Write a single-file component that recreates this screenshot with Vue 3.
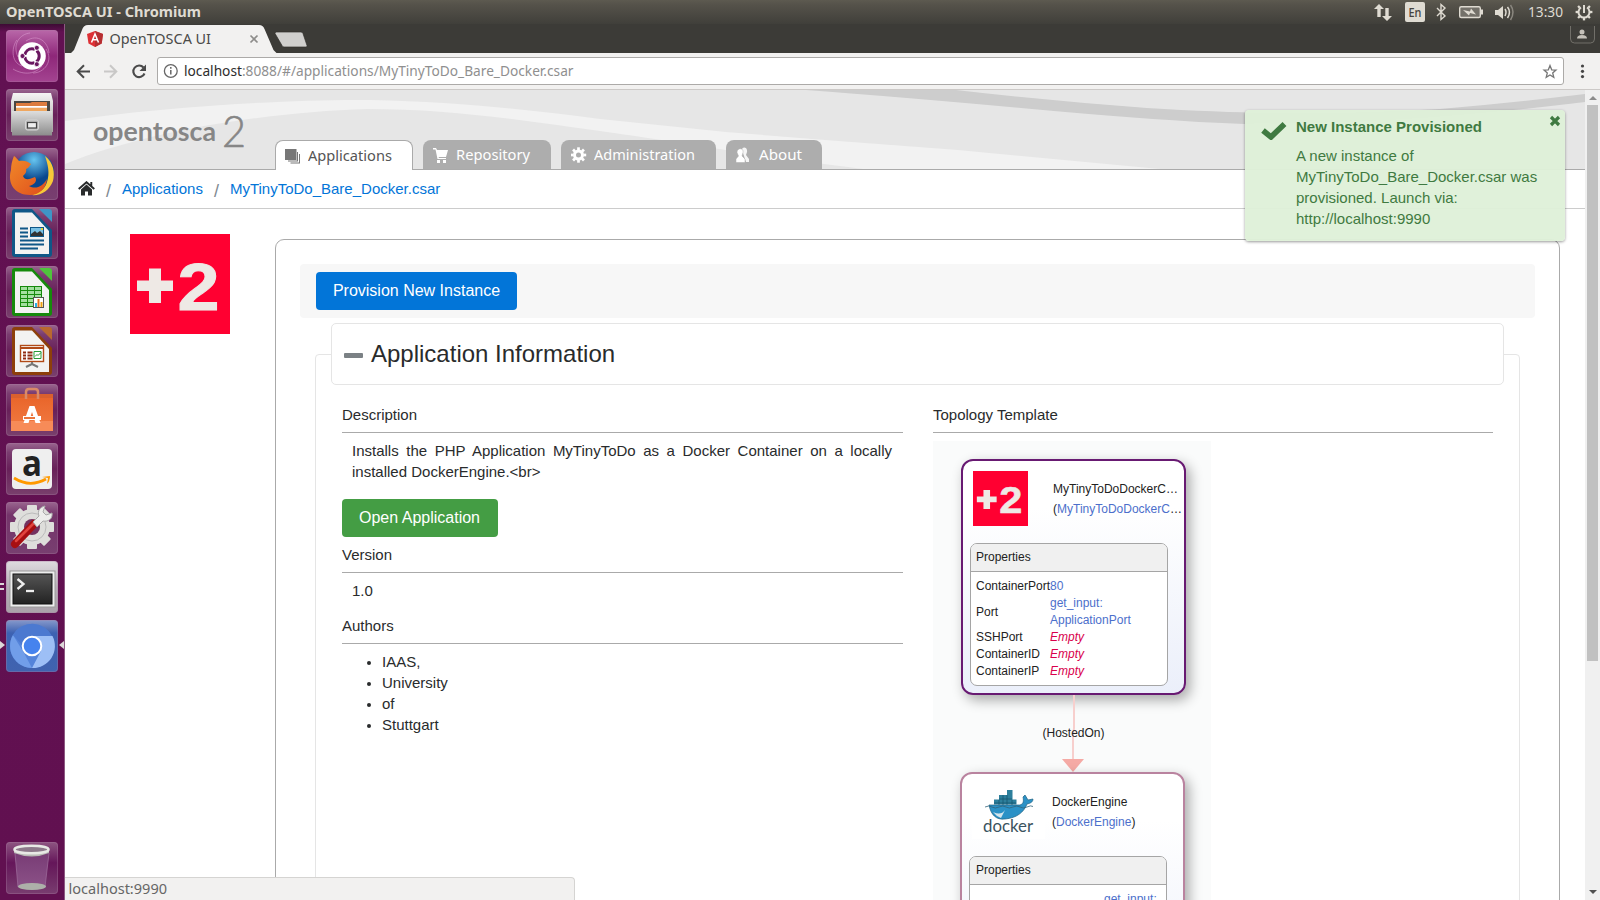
<script setup>
const tabs = [
  { id: 'apps', label: 'Applications', width: 138, text: 84, gap: 10, active: true },
  { id: 'repo', label: 'Repository', width: 128, text: 74, gap: 10 },
  { id: 'admin', label: 'Administration', width: 155, text: 101, gap: 10 },
  { id: 'about', label: 'About', width: 96, text: 43, gap: 0 },
]
const launcher = ['dash', 'files', 'firefox', 'writer', 'calc', 'impress', 'software', 'amazon', 'settings', 'terminal', 'chromium']
const authors = ['IAAS,', 'University', 'of', 'Stuttgart']
const docColors = {
  writer: ['#0f5787', '#3f95c6'],
  calc: ['#168a0c', '#4fc43c'],
  impress: ['#8d3f0b', '#b9692f'],
}
const teeth = [0, 45, 90, 135, 180, 225, 270, 315]
</script>

<template>
  <div class="desktop">
    <header class="menubar">
      <svg class="menu-title" width="210" height="24"><text x="6" y="17" textLength="195" lengthAdjust="spacingAndGlyphs">OpenTOSCA UI - Chromium</text></svg>
      <svg class="indicators" width="240" height="24" viewBox="1360 0 240 24">
        <g fill="#dfdbd2">
          <path d="M1379 4l5 5h-3.300v8h-3.400V9h-3.300zM1387 21l-5-5h3.300V8h3.400v8h3.300z" />
          <rect x="1405" y="2" width="20" height="20" rx="2" />
          <path d="M1495 10h3l5-4v13l-5-4h-3z" />
        </g>
        <text class="en" x="1408.500" y="17" textLength="13" lengthAdjust="spacingAndGlyphs">En</text>
        <path d="M1437 8l8 8-4 3.500V4.500l4 3.500-8 8" fill="none" stroke="#dfdbd2" stroke-width="1.400" />
        <rect x="1459.700" y="6.700" width="20.600" height="10.800" rx="1.500" fill="#74716a" stroke="#dfdbd2" stroke-width="1.400" />
        <path d="M1481 9.500h2v5h-2M1463 10l7 1.500 1-3 5 6-6-1.500-1 2.500z" fill="#dfdbd2" />
        <path d="M1505 9q2 3 0 7M1507.500 7q4 5 0 11" fill="none" stroke="#dfdbd2" stroke-width="1.500" />
        <path d="M1510.500 5q5 7 0 15" fill="none" stroke="#8a877f" stroke-width="1.500" />
        <text class="clock" x="1528" y="17" textLength="35" lengthAdjust="spacingAndGlyphs">13:30</text>
        <g transform="translate(1584 12)" stroke="#dfdbd2" fill="none">
          <path d="M-3-4.500A5.500 5.500 0 1 0 3-4.500" stroke-width="2" />
          <path d="M0-7V1" stroke-width="2" />
          <path v-for="a in teeth.slice(1)" :key="a" :transform="`rotate(${a})`" d="M0-6V-8.400" stroke-width="2.300" />
        </g>
      </svg>
    </header>

    <div class="workspace">
      <aside class="launcher">
        <svg width="0" height="0" class="defs">
          <defs>
            <linearGradient id="silver" x2="0" y2="1"><stop stop-color="#f5f5f4" /><stop offset="1" stop-color="#a3a3a0" /></linearGradient>
            <linearGradient id="metal" x2="0" y2="1"><stop stop-color="#dedede" /><stop offset="1" stop-color="#8c8c8c" /></linearGradient>
            <linearGradient id="fox" x2="1" y2="1"><stop stop-color="#f18a29" /><stop offset="1" stop-color="#df4d1c" /></linearGradient>
            <radialGradient id="globe" cy=".2"><stop stop-color="#66c5f0" /><stop offset="1" stop-color="#09468d" /></radialGradient>
            <linearGradient id="bag" x2="0" y2="1"><stop stop-color="#e9662b" /><stop offset="1" stop-color="#f27b43" /></linearGradient>
            <linearGradient id="screen" x2="0" y2="1"><stop stop-color="#555" /><stop offset="1" stop-color="#222" /></linearGradient>
            <linearGradient id="bin" x2="0" y2="1"><stop stop-color="#783c75" /><stop offset="1" stop-color="#8d5389" /></linearGradient>
          </defs>
        </svg>
        <div v-for="name in launcher" :key="name" class="tile" :class="name">
          <svg width="52" height="52" viewBox="0 0 52 52">
            <g v-if="name === 'dash'">
              <g fill="none" stroke="#e0a3d5" stroke-opacity=".5">
                <path d="M12 27C6 14 14 4 24 3M40 19c8 12-2 24-13 24M20 11c12-8 22 1 23 12M16 36c-12-4-10-20-5-26M36 36C28 46 15 44 7 39" />
              </g>
              <circle cx="26" cy="26" r="13.800" fill="#fff" />
              <circle cx="26" cy="26" r="7.200" fill="none" stroke="#6a1760" stroke-width="3" stroke-dasharray="13.080 2" stroke-dashoffset="6.540" />
              <g fill="#6a1760" stroke="#fff" stroke-width=".8"><circle cx="16.500" cy="26" r="2.500" /><circle cx="30.800" cy="17.800" r="2.500" /><circle cx="30.800" cy="34.200" r="2.500" /></g>
            </g>
            <g v-else-if="name === 'files'">
              <path d="M7 4h38l2 8v31H5V12z" fill="url(#silver)" /><path d="M8 12h36v10H8z" fill="#4a4743" />
              <path d="M10 14h14l2-1h15v10H10z" fill="#dc7b3e" /><path d="M10 17h31v1.800H10z" fill="#fff" /><path d="M10 19h31v4H10z" fill="#efa760" />
              <path d="M6 22h40v24.500H6z" fill="url(#metal)" /><rect x="19.500" y="31" width="13" height="10" rx="2" fill="#b9b9b9" stroke="#d5d5d5" /><rect x="21.500" y="33.500" width="9" height="5.500" fill="#eee" stroke="#444" stroke-width="1.200" />
            </g>
            <g v-else-if="name === 'firefox'">
              <circle cx="28" cy="24" r="20" fill="url(#globe)" />
              <path d="M39 8c9 7 10 17 8 25C43 43 35 48 25 47c8-2 14-6 16-13 3-9 1-17-2-26z" fill="#f7c838" />
              <path d="M8 8c2 1 3 3 5 5 4-1 9 0 12 3l-3 4-2 1c1 3-1 5-3 7 2 5 7 3 12 1 3 4-1 8-6 9 7 4 14 0 18-7-1 10-8 16-17 16C9 47 1 36 5 22c0-5 1-9 3-14z" fill="url(#fox)" />
            </g>
            <g v-else-if="docColors[name]">
              <path d="M9 2h17l20 21v24q0 3-3 3H9q-3 0-3-3V5q0-3 3-3z" :fill="docColors[name][0]" /><path d="M33 2h10q3 0 3 3v10z" :fill="docColors[name][1]" />
              <path d="M9 5.500h17L43 24v23H9z" fill="#f3f3f2" />
              <g v-if="name === 'writer'">
                <path d="M14 21.500h8M14 25.500h8M14 29.500h8M14 33.500h24M14 37.500h24M14 41.500h18" stroke="#0f5787" stroke-width="2" />
                <rect x="24.500" y="20.500" width="13" height="9" fill="#7ac1e4" stroke="#0f5787" /><path d="M25 29v-2l4-3 2 2 3-2 3 3v2z" fill="#333" /><circle cx="36" cy="22" r="1" fill="#fd0" />
              </g>
              <g v-else-if="name === 'calc'">
                <rect x="14.500" y="20.500" width="21" height="20" fill="#a3dfa0" stroke="#168a0c" /><path d="M14 24.500h22M14 28.500h22M14 32.500h22M14 36.500h22M21.500 20v21M28.500 20v21" stroke="#168a0c" />
                <rect x="27.500" y="31.500" width="10" height="10" fill="#fff" stroke="#555" /><path d="M29 41v-4h2v4" fill="#29aee5" /><path d="M31.500 41v-8h2v8" fill="#ea6d17" /><path d="M34.500 41v-5h2v5" fill="#eca012" />
              </g>
              <g v-else>
                <rect x="14.500" y="20.500" width="23" height="16" fill="#fff" stroke="#b14a17" stroke-width="1.400" /><path d="M15 23h23" stroke="#b14a17" stroke-width="2" /><path d="M17 27.500h3m1.500 0h5M17 30.500h3m1.500 0h5M17 33.500h3m1.500 0h5" stroke="#8f2b12" stroke-width="2" /><path d="M28 26.500h7v7h-7zm1 5 2-2 1 1 3-3" fill="none" stroke="#279c39" />
                <path d="M26 37v3m0-1-6 3m6-3 6 3" stroke="#777" stroke-width="2" />
              </g>
            </g>
            <g v-else-if="name === 'software'">
              <path d="M5 10h42v37H5z" fill="#d9602d" /><path d="M5 14h42v33H5z" fill="url(#bag)" /><path d="M5 37h42v10H5z" fill="#f78b58" />
              <path d="M20 15V8q0-3 3-3h6q3 0 3 3v7" fill="none" stroke="#d98a68" stroke-width="2.500" />
              <path d="M17.500 39h5l3.500-11 3.500 11h5l-6-17h-5z" fill="#fff" /><path d="M17 32h18v4H17z" fill="#fff" /><path d="M18 34h11" stroke="#e75e1a" stroke-width="1.700" />
            </g>
            <g v-else-if="name === 'amazon'">
              <rect x="6" y="6" width="40" height="40" rx="4" fill="#efefef" /><text class="amazon-a" x="16" y="33" textLength="20" lengthAdjust="spacingAndGlyphs">a</text>
              <path d="M8 35q16 10 32 1" fill="none" stroke="#f90" stroke-width="2.700" /><path d="M36 34l8-1q0 5-3 8l1-6z" fill="#f90" />
            </g>
            <g v-else-if="name === 'settings'">
              <g transform="translate(26 25)" fill="#dededb"><rect v-for="a in teeth" :key="a" x="-5" y="-22" width="10" height="10" rx="1" :transform="`rotate(${a})`" /><circle r="18" /><circle r="14" fill="none" stroke="#bbb" /><circle r="8" fill="#73315f" /></g>
              <path d="M9 42 28 22" stroke="#a70f12" stroke-width="8" stroke-linecap="round" /><path d="M10 39 28 21" stroke="#e2443e" stroke-width="2.500" stroke-linecap="round" />
              <path d="M27 20 33 14c-2-5 1-9 6-10l-2 6 3 3 6-2c1 6-4 9-9 8l-6 6z" fill="#ededeb" stroke="#aaa" />
            </g>
            <g v-else-if="name === 'terminal'">
              <rect x="4" y="10" width="45" height="36" fill="#eee" stroke="#999" /><rect x="7" y="13" width="39" height="30" fill="url(#screen)" stroke="#111" />
              <path d="M11.500 18l6 5-6 5" fill="none" stroke="#eee" stroke-width="2.300" /><path d="M20 30h8" stroke="#eee" stroke-width="2.300" />
            </g>
            <g v-else>
              <circle cx="26" cy="26" r="22" fill="#5484da" /><path d="M7 15 18 33 26 48A22 22 0 0 1 7 15z" fill="#719ee9" /><path d="M26 16h20.500A22 22 0 0 1 26 48l9-17z" fill="#9dbff6" /><path d="M7 15A22 22 0 0 1 46 16H26L16 25z" fill="#4c79d0" />
              <circle cx="26" cy="26" r="9.300" fill="#4683ee" stroke="#fff" stroke-width="2" />
            </g>
          </svg>
        </div>
        <div class="tile trash">
          <svg width="52" height="52" viewBox="0 0 52 52"><path d="M9 11h34l-4 34q-13 6-27 0z" fill="url(#bin)" /><path d="M9 11l3 34M43 11l-4 34" stroke="#9b6898" stroke-width=".8" /><ellipse cx="26" cy="44.500" rx="14" ry="3.500" fill="#adb0a9" /><path d="M8 7v4q18 7 35 0V7z" fill="#b9bab5" /><ellipse cx="25.500" cy="7.500" rx="17" ry="3.800" fill="#8d788a" stroke="#e8e9e5" stroke-width="2.500" /></svg>
        </div>
        <i class="pip two"></i><i class="pip run"></i><i class="pip focus"></i>
      </aside>

      <section class="browser">
        <div class="tabstrip">
          <svg width="260" height="29" viewBox="65 24 260 29">
            <path d="M71 53l3-3 8-20q1.500-5 6-5h171q4 0 5.500 4l9 21 3 3z" fill="#f2f1f0" />
            <path d="M275 33.500q0-1.500 1.500-1.500H301q1.500 0 2 1.500l4 12q.3 1.500-1 1.500h-22q-1.500 0-2-1.500z" fill="#d0cfcd" stroke="#302f2c" stroke-width=".7" />
            <path d="M95 31l8 3-1.300 9.500L95 47l-6.500-3.500L87 34z" fill="#dd3035" /><path d="M95 31l8 3-1.300 9.500L95 47z" fill="#b52e31" /><path d="M91.500 42.500 95 34l3.500 8.500M92.500 39.700h5" fill="none" stroke="#fff" stroke-width="1.500" />
            <text class="tab-name" x="109.500" y="44" textLength="101.500" lengthAdjust="spacingAndGlyphs">OpenTOSCA UI</text>
            <path d="M250.500 35.500l7 7m0-7-7 7" stroke="#8d8c8a" stroke-width="1.700" />
          </svg>
          <svg class="profile" width="27" height="20" viewBox="1569 24 27 20"><path d="M1570.500 26v13q0 4 4 4h16q4 0 4-4V26" fill="#3f3e3a" stroke="#716f69" /><circle cx="1582" cy="32" r="2.500" fill="#c5c1b9" /><path d="M1577 38.500q0-3.500 5-3.500t5 3.500z" fill="#c5c1b9" /></svg>
        </div>

        <div class="toolbar">
          <svg class="nav" width="92" height="36" viewBox="65 53 92 36">
            <path d="M90 71.500H78m6-6.300-6.300 6.300 6.300 6.300" fill="none" stroke="#4a4a4a" stroke-width="2" /><path d="M104 71.500h12m-6-6.300 6.300 6.300-6.300 6.300" fill="none" stroke="#c9c8c7" stroke-width="2" />
            <path d="M143.500 67.500A5.800 5.800 0 1 0 144.500 73.500" fill="none" stroke="#4a4a4a" stroke-width="2.100" /><path d="M146 64.500v6.500h-6.500z" fill="#4a4a4a" />
          </svg>
          <div class="address">
            <svg class="url-line" width="430" height="26" viewBox="158 58 430 26"><circle cx="170.800" cy="71" r="6.400" fill="none" stroke="#666" stroke-width="1.300" /><path d="M170.800 70v4.500M170.800 67v1.700" stroke="#666" stroke-width="1.500" /><text class="url" x="184" y="76" textLength="389.500" lengthAdjust="spacingAndGlyphs"><tspan class="host">localhost</tspan>:8088/#/applications/MyTinyToDo_Bare_Docker.csar</text></svg>
            <svg class="star" width="20" height="26" viewBox="1540 58 20 26"><path d="M1550 65.500l1.700 4.300 4.300.3-3.300 2.900 1.100 4.300-3.800-2.300-3.800 2.300 1.100-4.300-3.300-2.900 4.300-.3z" fill="none" stroke="#777" stroke-width="1.300" /></svg>
          </div>
          <svg class="dots" width="36" height="36"><g fill="#444"><circle cx="18.500" cy="13" r="1.600" /><circle cx="18.500" cy="18.300" r="1.600" /><circle cx="18.500" cy="23.600" r="1.600" /></g></svg>
        </div>

        <div class="viewport">
          <main class="page">
            <div class="banner">
              <svg class="swoosh" width="1520" height="79" viewBox="65 90 1520 79">
                <path d="M65 121C170 106 300 99 370 100C460 102 530 110 600 119L726 132L825 140L958 150L1160 169H863C740 154 700 145 600 131C520 120 450 109 367 109C270 112 150 130 65 164z" fill="#f2f2f2" />
                <path d="M806 90H956Q1050 101 1147 108C1260 115 1330 114 1440 109Q1510 103 1585 94V102C1500 112 1400 124 1244 124Q1160 121 1021 108Q900 97 806 90z" fill="#cdcdcd" />
                <text class="logo" x="93" y="140.500" textLength="123" lengthAdjust="spacingAndGlyphs">opentosca</text><text class="logo-two" x="222" y="147" textLength="24" lengthAdjust="spacingAndGlyphs">2</text>
              </svg>
              <nav class="tabs">
                <div v-for="t in tabs" :key="t.id" class="tab" :class="{ active: t.active }" :style="{ width: t.width + 'px' }">
                  <svg width="16" height="16" viewBox="0 0 16 16">
                    <path v-if="t.id === 'apps'" d="M0 1h11.500v11H0zM12 4h1v9.500H3V12.500h9zM14 6h1v9.500H5.500v-1H14z" fill="currentColor" />
                    <path v-else-if="t.id === 'repo'" d="M0 1h3l1 2h11l-2 7H5.500L6 11h7v1H4.500L2.500 2.500H0zM4 13h3v3H4zM10 13h3v3h-3z" fill="currentColor" />
                    <g v-else-if="t.id === 'admin'" transform="translate(7.500 8)"><circle r="4" fill="none" stroke="currentColor" stroke-width="3" /><path v-for="a in teeth" :key="a" d="M0-5V-7.700" stroke="currentColor" stroke-width="2.700" :transform="`rotate(${a})`" /></g>
                    <g v-else fill="currentColor"><path d="M6 3C6-1 12 0 11 5l-1 3 3 4v3h-3L8 9z" opacity=".88" /><path d="M1 5.500c0-5 7-5 6 0L6 9l3 3v3.500H0V12l2.500-3z" stroke="#adadad" stroke-width=".5" /></g>
                  </svg>
                  <svg class="tab-label" :width="t.text + 2" height="24"><text x="0" y="17" :textLength="t.text" lengthAdjust="spacingAndGlyphs">{{ t.label }}</text></svg>
                </div>
              </nav>
            </div>
            <div class="crumbs">
              <svg class="home" width="17" height="15" viewBox="0 0 17 15"><path d="M8.500 3.500 14 8.500V14.500h-4v-4H7v4H3V8.500z" fill="#292b2c" /><path d="M.7 8 8.500 1.200 16.300 8M13.300 1v4" fill="none" stroke="#292b2c" stroke-width="1.900" /></svg>
              <span class="sep first">/</span><a>Applications</a><span class="sep">/</span><a>MyTinyToDo_Bare_Docker.csar</a>
            </div>

            <div class="content">
              <svg class="appicon" width="100" height="100" viewBox="0 0 100 100"><rect width="100" height="100" fill="#ff0031" /><path d="M19 34.500h12v12h12v10.500H31v12H19V57H7V46.500h12z" fill="#eee9e5" /><text class="two-glyph" x="47.500" y="76" textLength="42" lengthAdjust="spacingAndGlyphs">2</text></svg>
              <div class="panel">
                <div class="actions"><button class="primary">Provision New Instance</button></div>
                <section class="card">
                  <h2><i></i>Application Information</h2>
                  <div class="columns">
                    <div class="details">
                      <h4>Description</h4>
                      <p class="justify">Installs the PHP Application MyTinyToDo as a Docker Container on a locally installed DockerEngine.&lt;br&gt;</p>
                      <button class="success">Open Application</button>
                      <h4>Version</h4>
                      <p class="version">1.0</p>
                      <h4>Authors</h4>
                      <ul><li v-for="a in authors" :key="a">{{ a }}</li></ul>
                    </div>
                    <div class="topology">
                      <h4>Topology Template</h4>
                      <div class="canvas">
                        <div class="node container">
                          <div class="node-head">
                            <svg width="55" height="55" viewBox="0 0 100 100"><rect width="100" height="100" fill="#ff0031" /><path d="M19 34.500h12v12h12v10.500H31v12H19V57H7V46.500h12z" fill="#eee9e5" /><text class="two-glyph" x="47.500" y="76" textLength="42" lengthAdjust="spacingAndGlyphs">2</text></svg>
                            <div class="names"><span>MyTinyToDoDockerC…</span><span>(<b>MyTinyToDoDockerC</b>…</span></div>
                          </div>
                          <div class="props">
                            <h5>Properties</h5>
                            <dl>
                              <dt>ContainerPort</dt><dd>80</dd>
                              <dt>Port</dt><dd>get_input:<br>ApplicationPort</dd>
                              <dt>SSHPort</dt><dd class="empty">Empty</dd>
                              <dt>ContainerID</dt><dd class="empty">Empty</dd>
                              <dt>ContainerIP</dt><dd class="empty">Empty</dd>
                            </dl>
                          </div>
                        </div>
                        <svg class="edge" width="80" height="77" viewBox="1033 695 80 77"><path d="M1074 695v33l-1 8v26" fill="none" stroke="#f7cfcd" stroke-width="2" /><path d="M1062 759h22l-11 13z" fill="#f5aaa5" /><text x="1042.500" y="737" textLength="62">(HostedOn)</text></svg>
                        <div class="node engine">
                          <div class="node-head">
                            <svg class="docker" width="73" height="55" viewBox="972 784 73 55"><rect x="972" y="784" width="73" height="55" fill="#fff" />
                              <path d="M994 799.500h5v-4.500h8v-5h5.500v9.500h4v5H994z" fill="#2d7f9c" /><path d="M999 800v5m4-10v10m4-10v10m5-5v5m-18-2h22m-17-4h13" stroke="#16556e" stroke-width=".7" />
                              <path d="M989 805h31c3-1 4-3 3-8l2-2 3 5 5-1q0 4-6 5c-3 8-10 14-22 15-9 1-14-4-16-14z" fill="#2b91c6" stroke="#1e6182" stroke-width=".7" /><path d="M993 812q8 4 12-2l-4 8q-5-2-8-6z" fill="#d5e5ec" /><path d="M985 807q4-2 7 0t7 0 7 0 7 0 7 0 7 0 6-.5" fill="none" stroke="#31637a" stroke-width=".8" />
                              <text x="983" y="832" textLength="50" lengthAdjust="spacingAndGlyphs">docker</text>
                            </svg>
                            <div class="names"><span>DockerEngine</span><span>(<b>DockerEngine</b>)</span></div>
                          </div>
                          <div class="props"><h5>Properties</h5><dl class="wide"><dt></dt><dd>get_input:</dd></dl></div>
                        </div>
                      </div>
                    </div>
                  </div>
                </section>
              </div>
            </div>
          </main>
          <div class="scrollbar"><i class="up"></i><i class="thumb"></i><i class="down"></i></div>
          <div class="toast">
            <svg class="check" width="26" height="20" viewBox="0 0 26 20"><path d="M2 10.500 10 17 23.500 4" fill="none" stroke="#3f7a41" stroke-width="5.600" /></svg>
            <div><strong>New Instance Provisioned</strong><p>A new instance of MyTinyToDo_Bare_Docker.csar was provisioned. Launch via: http://localhost:9990</p></div>
            <svg class="close" width="12" height="12"><path d="M2 2l8 8m0-8-8 8" stroke="#3f7a41" stroke-width="3.200" /></svg>
          </div>
          <div class="status"><svg width="200" height="22"><text x="3.500" y="16" textLength="98.500" lengthAdjust="spacingAndGlyphs">localhost:9990</text></svg></div>
        </div>
      </section>
    </div>
  </div>
</template>

<style>
html, body { margin: 0; overflow: hidden; }
</style>

<style scoped>
* { box-sizing: border-box; }
svg { display: block; flex: none; }
.desktop { width: 1600px; height: 900px; overflow: hidden; display: flex; flex-direction: column; background: #fff; color: #292b2c; font: 15px/21px "Liberation Sans", Arial, sans-serif; }
.menubar { height: 24px; flex: none; display: flex; justify-content: space-between; background: linear-gradient(#5d5a50, #55524a 20%, #403f3a); }
.menubar text, .tab-name, .url, .tab-label text, .status text { font-family: "Noto Sans", sans-serif; }
.menu-title text { font-size: 14px; font-weight: bold; fill: #dfdbd2; }
.en { font-size: 13px; font-weight: 500; fill: #45433e; }
.clock { font-size: 14.500px; fill: #dfdbd2; }
.workspace { flex: 1; min-height: 0; display: flex; }
.launcher { position: relative; width: 65px; flex: none; display: flex; flex-direction: column; align-items: flex-start; gap: 7px; padding: 6px 0 6px 6px; background: linear-gradient(#3d0b34, #621152 8px, #611050); border-right: 1px solid #8d5982; }
.defs { position: absolute; }
.tile { width: 52px; height: 52px; flex: none; border-radius: 4px; background: linear-gradient(#9a668f, #7a3d70 18%, #682059 50%, #79406d); box-shadow: inset 0 0 0 1px #aa7ba155; }
.tile svg, .url-line { overflow: visible; }
.dash { background: linear-gradient(#b968a9, #8e2779 50%, #a44491); }
.firefox, .settings { background: linear-gradient(#9a668f, #74346a 25%, #783f70); }
.terminal { background: linear-gradient(#dfdbdf, #b7afb7 50%, #a9a1a9); }
.chromium { background: linear-gradient(#8799cb, #3d62b2 25%, #4063af); }
.trash { margin-top: auto; background: linear-gradient(#8d5581, #65165a 40%, #6b2360 60%, #793d70); }
.amazon-a { font: bold 36px "Open Sans", sans-serif; fill: #222; }
.pip { position: absolute; width: 0; height: 0; border: 4px solid transparent; }
.pip.run { left: 0; top: 617px; border-left: 5px solid #dcd8d8; border-right: 0; }
.pip.focus { right: 0; top: 617px; border-right: 5px solid #dcd8d8; border-left: 0; }
.pip.two { left: 0; top: 559px; width: 4px; height: 7px; border: 0 solid #dcd8d8; border-width: 2.500px 0; }
.browser { flex: 1; min-width: 0; display: flex; flex-direction: column; }
.tabstrip { height: 29px; flex: none; display: flex; justify-content: space-between; background: #3c3b37; padding-right: 4px; }
.tab-name { font-size: 14.500px; fill: #4b4a48; }
.toolbar { height: 37px; flex: none; display: flex; background: #f2f1f0; border-bottom: 1px solid #ccc9c7; }
.address { flex: 1; height: 28px; margin-top: 4px; display: flex; justify-content: space-between; background: #fff; border: 1px solid #acaaa8; border-radius: 3px; }
.star { margin-right: 3px; }
.url { font-size: 14.500px; fill: #8f8f8f; }
.host { fill: #2d2d2d; }
.viewport { position: relative; flex: 1; min-height: 0; display: flex; }
.page { flex: 1; min-width: 0; overflow: hidden; }
.banner { position: relative; height: 80px; display: flex; align-items: flex-end; background: #e6e6e6; border-bottom: 1px solid #aaa; }
.swoosh { position: absolute; inset: 0; }
.logo { font: bold 27px Lato, sans-serif; fill: #868686; }
.logo-two { font: 300 43px Lato, sans-serif; fill: #868686; stroke: #868686; stroke-width: .6px; }
.tabs { position: relative; display: flex; gap: 10px; margin-left: 210px; margin-bottom: -1px; }
.tab { height: 30px; display: flex; align-items: center; padding-left: 10px; gap: 7px; color: #fff; background: #adadad; border-radius: 8px 8px 0 0; border-bottom: 1px solid #aaa; }
.tab.active { background: #fff; color: #777; border: 1px solid #aaa; border-bottom: 0; padding-left: 9px; }
.tab-label text { font-size: 14.500px; fill: #fff; }
.tab.active .tab-label text { fill: #555; }
.crumbs { height: 39px; display: flex; align-items: flex-start; padding: 8px 0 0 13px; border-bottom: 1px solid #ccc; color: #0275d8; }
.crumbs a { white-space: nowrap; }
.home { margin-top: 3px; }
.sep { color: #818a91; font-size: 18px; width: 5px; margin: 3px 11px 0 11px; }
.sep.first { margin: 3px 11px 0 11px; }
.content { display: flex; align-items: flex-start; padding-top: 25px; }
.appicon { margin: 0 45px 0 65px; }
.two-glyph { font: bold 67px "Liberation Sans", sans-serif; fill: #eee9e5; stroke: #eee9e5; stroke-width: 1px; }
.panel { width: 1285px; height: 800px; margin-top: 5px; border: 1px solid #aaa; border-radius: 9px; padding: 24px; }
.actions { height: 54px; background: #f7f7f7; border-radius: 4px; padding: 8px 16px; }
button { display: block; height: 38px; border: 0; border-radius: 4px; color: #fff; font: 16px/24px "Liberation Sans", Arial, sans-serif; padding: 0; white-space: nowrap; }
.primary { width: 201px; background: #0275d8; }
.success { width: 156px; margin-top: 17px; margin-bottom: 7px; background: #449d44; padding-right: 1px; }
.card { height: 640px; margin: 36px 15px 0; border: 1px solid #e5e5e5; border-radius: 4px; }
h2 { display: flex; align-items: center; height: 62px; margin: -32px 15px 0; background: #fff; border: 1px solid #e5e5e5; border-radius: 5px; font: 24px/28px "Liberation Sans", Arial, sans-serif; padding-left: 12px; }
h2 i { width: 19px; height: 5px; border-radius: 1px; margin: 2px 8px 0 0; background: #7b8185; }
.columns { display: flex; gap: 30px; padding: 19px 26px 0; }
.details, .topology { width: 561px; }
h4 { margin: 0; height: 29px; font: inherit; border-bottom: 1px solid #aaa; }
.topology { width: 560px; }
p { margin: 7px 11px 0 10px; }
.justify { text-align: justify; }
.version { margin-bottom: 14px; }
ul { margin: 7px 0 0; padding-left: 25px; list-style: none; }
li { display: flex; align-items: center; gap: 11px; }
li::before { content: ""; width: 4px; height: 4px; margin-top: 2px; border-radius: 50%; background: #292b2c; }
.canvas { position: relative; width: 278px; height: 500px; margin-top: 8px; background: #fafbfb; font-size: 12px; line-height: 17px; color: #222; }
.node { position: absolute; width: 225px; height: 236px; border: 2px solid #681a72; border-radius: 12px; padding: 10px 0 0 7px; background: linear-gradient(#fff, #fff 20%, #ebeffa); box-shadow: 4px 5px 13px #0005; }
.container { left: 28px; top: 18px; }
.engine { left: 27px; top: 331px; border-color: #b9839f; }
.node-head { display: flex; height: 72px; padding-left: 3px; }
.names { display: flex; flex-direction: column; line-height: 20px; padding-top: 8px; margin-left: 25px; white-space: nowrap; }
.engine .names { margin-left: 7px; }
b { font-weight: normal; color: #4c6fcb; }
.props { width: 198px; height: 143px; border: 1px solid #a5a5a5; border-radius: 7px; background: #fff; overflow: hidden; }
h5 { margin: 0; height: 28px; font: 12px/26px "Liberation Sans", Arial, sans-serif; padding-left: 6px; background: #f0f0f0; border-bottom: 1px solid #a5a5a5; }
.container h5 { padding-left: 5px; }
dl { display: grid; grid-template-columns: 74px 1fr; align-items: center; margin: 6px 0 0 5px; line-height: 17px; }
dl.wide { grid-template-columns: 129px 1fr; }
dd { margin: 0; color: #4c6fcb; }
.empty { color: #d9004c; font-style: italic; }
.edge { position: absolute; left: 100px; top: 254px; }
.edge text { font: 12px "Liberation Sans", sans-serif; fill: #222; }
.docker text { font: 17px Lato, sans-serif; fill: #3b5360; }
.scrollbar { width: 15px; flex: none; display: flex; flex-direction: column; align-items: center; background: #f0f0f0; }
.up { border: 4px solid transparent; border-bottom-color: #8c8c8c; border-top: 0; margin: 6px 0 5px; }
.thumb { width: 11px; height: 556px; background: #c1c1c1; }
.down { border: 4px solid transparent; border-top-color: #505050; border-bottom: 0; margin-top: auto; margin-bottom: 6px; }
.toast { position: absolute; left: 1180px; top: 20px; width: 320px; height: 131px; display: flex; align-items: flex-start; color: #3f7a41; background: #dff0d8f5; border-radius: 4px; box-shadow: 0 1px 3px #0006; padding: 6px 20px 0 16px; }
.check { margin: 4px 9px 0 0; }
.toast strong { display: block; white-space: nowrap; }
.toast p { margin: 8px 0 0; width: 246px; }
.close { position: absolute; right: 4px; top: 5px; }
.status { position: absolute; left: 0; bottom: 0; width: 510px; height: 23px; background: #f2f1f0; border: 1px solid #d5d4d2; border-left: 0; border-bottom: 0; border-radius: 0 4px 0 0; }
.status text { font-size: 14.500px; fill: #666; }
</style>
